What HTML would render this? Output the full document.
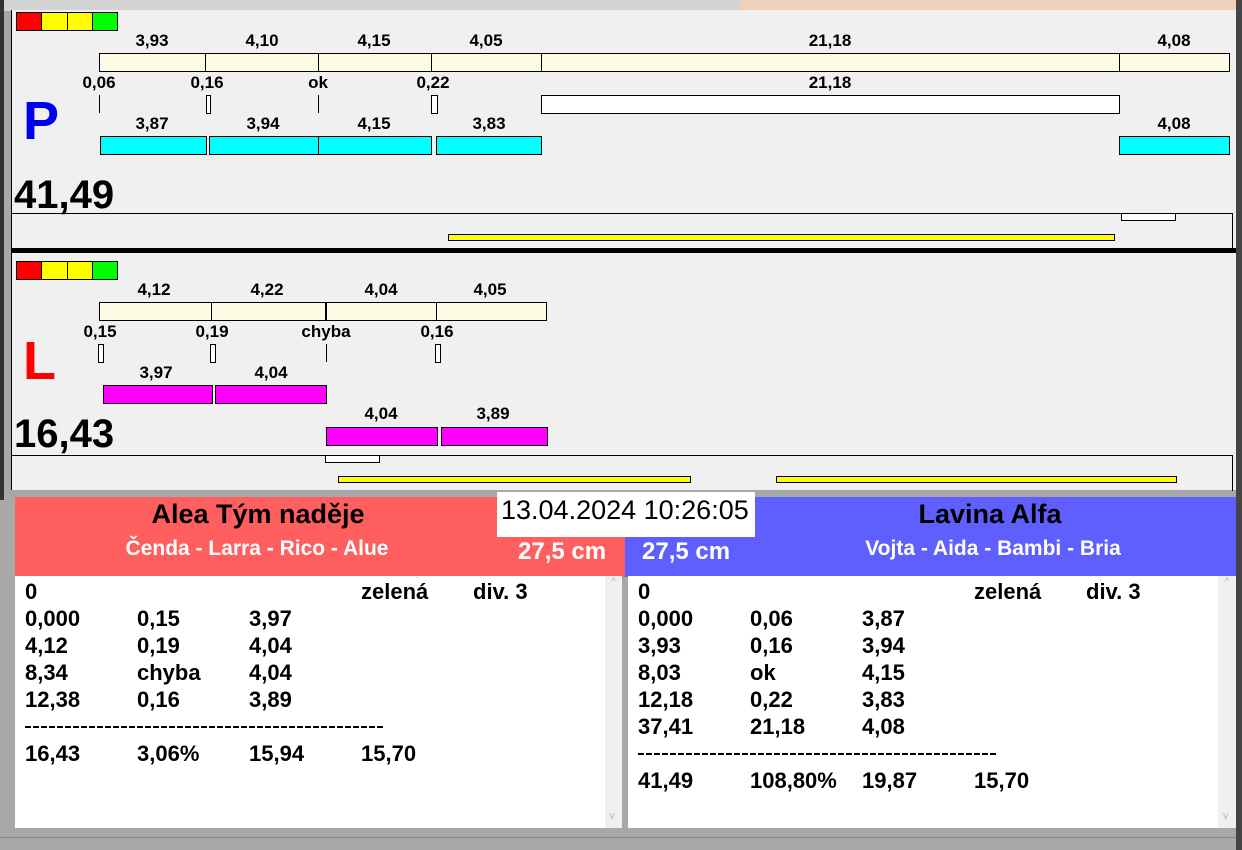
<!DOCTYPE html>
<html><head><meta charset="utf-8"><style>
body{margin:0;width:1242px;height:850px;overflow:hidden;background:#a8a8a8;position:relative;font-family:"Liberation Sans",Arial,sans-serif}
div{position:absolute;box-sizing:border-box}
.b{border:1px solid #000}
.y{background:#fdfbe3}.c{background:#00ffff}.m{background:#ff00ff}.w{background:#fff}.ye{background:#ffff00}
.t{font-weight:bold;font-size:17px;transform:translateX(-50%);white-space:nowrap;line-height:16px}
.v{width:1px;background:#000}
.r{font-weight:bold;font-size:22px;line-height:20px;white-space:nowrap}
.d{height:2px;background:repeating-linear-gradient(90deg,#000 0 6px,transparent 6px 8px)}
</style></head><body>
<div style="left:0;top:0;width:1242px;height:11px;background:#d4d4d4"></div>
<div style="left:740px;top:0;width:496px;height:11px;background:#ecd2bc"></div>
<div style="left:0;top:0;width:4px;height:500px;background:#333"></div>
<div style="left:1236px;top:0;width:6px;height:850px;background:#444"></div>

<div style="left:11px;top:10px;width:1225px;height:240px;background:#f0f0f0;border-left:1px solid #000"></div>
<div class="b" style="left:16px;top:12px;width:26px;height:19px;background:#f00"></div>
<div class="b" style="left:41px;top:12px;width:27px;height:19px;background:#ff0"></div>
<div class="b" style="left:67px;top:12px;width:26px;height:19px;background:#ff0"></div>
<div class="b" style="left:92px;top:12px;width:26px;height:19px;background:#0f0"></div>

<div class="t" style="left:152px;top:33px">3,93</div>
<div class="t" style="left:262px;top:33px">4,10</div>
<div class="t" style="left:374px;top:33px">4,15</div>
<div class="t" style="left:486px;top:33px">4,05</div>
<div class="t" style="left:830px;top:33px">21,18</div>
<div class="t" style="left:1174px;top:33px">4,08</div>
<div class="b y" style="left:99px;top:53px;width:108px;height:19px;border-right-width:2px"></div>
<div class="b y" style="left:205px;top:53px;width:114px;height:19px"></div>
<div class="b y" style="left:318px;top:53px;width:115px;height:19px;border-right-width:2px"></div>
<div class="b y" style="left:431px;top:53px;width:111px;height:19px"></div>
<div class="b y" style="left:541px;top:53px;width:579px;height:19px"></div>
<div class="b y" style="left:1119px;top:53px;width:111px;height:19px"></div>

<div class="t" style="left:99px;top:75px">0,06</div>
<div class="t" style="left:207px;top:75px">0,16</div>
<div class="t" style="left:318px;top:75px">ok</div>
<div class="t" style="left:433px;top:75px">0,22</div>
<div class="t" style="left:830px;top:75px">21,18</div>
<div class="v" style="left:99px;top:95px;height:18px"></div>
<div class="b w" style="left:206px;top:95px;width:5px;height:19px"></div>
<div class="v" style="left:318px;top:95px;height:18px"></div>
<div class="b w" style="left:431px;top:95px;width:7px;height:19px"></div>
<div class="b w" style="left:541px;top:95px;width:579px;height:19px"></div>

<div class="t" style="left:152px;top:116px">3,87</div>
<div class="t" style="left:263px;top:116px">3,94</div>
<div class="t" style="left:374px;top:116px">4,15</div>
<div class="t" style="left:489px;top:116px">3,83</div>
<div class="t" style="left:1174px;top:116px">4,08</div>
<div class="b c" style="left:100px;top:136px;width:107px;height:19px"></div>
<div class="b c" style="left:209px;top:136px;width:110px;height:19px"></div>
<div class="b c" style="left:318px;top:136px;width:114px;height:19px"></div>
<div class="b c" style="left:436px;top:136px;width:106px;height:19px"></div>
<div class="b c" style="left:1119px;top:136px;width:111px;height:19px"></div>

<div style="left:23px;top:94px;font-size:54px;font-weight:bold;color:#0000ee;line-height:54px">P</div>
<div style="left:14px;top:175px;font-size:40px;font-weight:bold;line-height:40px">41,49</div>
<div style="left:12px;top:213px;width:1221px;height:36px;border-top:1px solid #000;border-right:1px solid #000"></div>
<div class="b w" style="left:1121px;top:213px;width:55px;height:8px"></div>
<div class="b ye" style="left:448px;top:234px;width:667px;height:7px"></div>
<div style="left:11px;top:248px;width:1225px;height:5px;background:#000"></div>

<div style="left:11px;top:253px;width:1225px;height:237px;background:#f0f0f0;border-left:1px solid #000"></div>
<div class="b" style="left:16px;top:261px;width:26px;height:19px;background:#f00"></div>
<div class="b" style="left:41px;top:261px;width:27px;height:19px;background:#ff0"></div>
<div class="b" style="left:67px;top:261px;width:26px;height:19px;background:#ff0"></div>
<div class="b" style="left:92px;top:261px;width:26px;height:19px;background:#0f0"></div>

<div class="t" style="left:154px;top:282px">4,12</div>
<div class="t" style="left:267px;top:282px">4,22</div>
<div class="t" style="left:381px;top:282px">4,04</div>
<div class="t" style="left:490px;top:282px">4,05</div>
<div class="b y" style="left:99px;top:302px;width:113px;height:19px"></div>
<div class="b y" style="left:211px;top:302px;width:116px;height:19px;border-right-width:2px"></div>
<div class="b y" style="left:326px;top:302px;width:111px;height:19px"></div>
<div class="b y" style="left:436px;top:302px;width:111px;height:19px"></div>

<div class="t" style="left:100px;top:324px">0,15</div>
<div class="t" style="left:212px;top:324px">0,19</div>
<div class="t" style="left:326px;top:324px">chyba</div>
<div class="t" style="left:437px;top:324px">0,16</div>
<div class="b w" style="left:98px;top:344px;width:6px;height:19px"></div>
<div class="b w" style="left:210px;top:344px;width:6px;height:19px"></div>
<div class="v" style="left:326px;top:344px;height:18px"></div>
<div class="b w" style="left:435px;top:344px;width:6px;height:19px"></div>

<div class="t" style="left:156px;top:365px">3,97</div>
<div class="t" style="left:271px;top:365px">4,04</div>
<div class="b m" style="left:103px;top:385px;width:110px;height:19px"></div>
<div class="b m" style="left:215px;top:385px;width:112px;height:19px"></div>
<div class="t" style="left:381px;top:406px">4,04</div>
<div class="t" style="left:493px;top:406px">3,89</div>
<div class="b m" style="left:326px;top:427px;width:112px;height:19px"></div>
<div class="b m" style="left:441px;top:427px;width:107px;height:19px"></div>

<div style="left:23px;top:334px;font-size:54px;font-weight:bold;color:#ff0000;line-height:54px">L</div>
<div style="left:14px;top:414px;font-size:40px;font-weight:bold;line-height:40px">16,43</div>
<div style="left:12px;top:455px;width:1221px;height:36px;border-top:1px solid #000;border-right:1px solid #000"></div>
<div class="b w" style="left:325px;top:455px;width:55px;height:8px"></div>
<div class="b ye" style="left:338px;top:476px;width:353px;height:7px"></div>
<div class="b ye" style="left:776px;top:476px;width:401px;height:7px"></div>

<div style="left:15px;top:497px;width:610px;height:80px;background:#ff5f5f"></div>
<div style="left:625px;top:497px;width:611px;height:80px;background:#5f5fff"></div>
<div style="left:258px;top:499px;transform:translateX(-50%);font-size:27px;font-weight:bold;white-space:nowrap">Alea Tým naděje</div>
<div style="left:257px;top:537px;transform:translateX(-50%);font-size:21px;font-weight:bold;color:#fff;white-space:nowrap">Čenda - Larra - Rico - Alue</div>
<div style="left:518px;top:538px;font-size:24px;font-weight:bold;color:#fff;white-space:nowrap">27,5 cm</div>
<div style="left:990px;top:499px;transform:translateX(-50%);font-size:27px;font-weight:bold;white-space:nowrap">Lavina Alfa</div>
<div style="left:993px;top:537px;transform:translateX(-50%);font-size:21px;font-weight:bold;color:#fff;white-space:nowrap">Vojta - Aida - Bambi - Bria</div>
<div style="left:642px;top:538px;font-size:24px;font-weight:bold;color:#fff;white-space:nowrap">27,5 cm</div>
<div style="left:497px;top:492px;width:258px;height:45px;background:#fff;font-size:27px;padding:3px 0 0 4px;white-space:nowrap">13.04.2024 10:26:05</div>

<div style="left:15px;top:576px;width:590px;height:252px;background:#fff"></div>
<div style="left:605px;top:576px;width:17px;height:252px;background:#f0f0f0;color:#bbb;font-size:11px;text-align:center">^<div style="left:4px;top:234px">v</div></div>
<div style="left:628px;top:576px;width:590px;height:252px;background:#fff"></div>
<div style="left:1218px;top:576px;width:18px;height:252px;background:#f0f0f0;color:#bbb;font-size:11px;text-align:center">^<div style="left:5px;top:234px">v</div></div>
<div style="left:0;top:837px;width:1236px;height:1px;background:#888"></div>

<div class="r" style="left:25px;top:582px">0</div><div class="r" style="left:361px;top:582px">zelená</div><div class="r" style="left:473px;top:582px">div. 3</div>
<div class="r" style="left:25px;top:609px">0,000</div><div class="r" style="left:137px;top:609px">0,15</div><div class="r" style="left:249px;top:609px">3,97</div>
<div class="r" style="left:25px;top:636px">4,12</div><div class="r" style="left:137px;top:636px">0,19</div><div class="r" style="left:249px;top:636px">4,04</div>
<div class="r" style="left:25px;top:663px">8,34</div><div class="r" style="left:137px;top:663px">chyba</div><div class="r" style="left:249px;top:663px">4,04</div>
<div class="r" style="left:25px;top:690px">12,38</div><div class="r" style="left:137px;top:690px">0,16</div><div class="r" style="left:249px;top:690px">3,89</div>
<div class="d" style="left:25px;top:726px;width:360px"></div>
<div class="r" style="left:25px;top:744px">16,43</div><div class="r" style="left:137px;top:744px">3,06%</div><div class="r" style="left:249px;top:744px">15,94</div><div class="r" style="left:361px;top:744px">15,70</div>

<div class="r" style="left:638px;top:582px">0</div><div class="r" style="left:974px;top:582px">zelená</div><div class="r" style="left:1086px;top:582px">div. 3</div>
<div class="r" style="left:638px;top:609px">0,000</div><div class="r" style="left:750px;top:609px">0,06</div><div class="r" style="left:862px;top:609px">3,87</div>
<div class="r" style="left:638px;top:636px">3,93</div><div class="r" style="left:750px;top:636px">0,16</div><div class="r" style="left:862px;top:636px">3,94</div>
<div class="r" style="left:638px;top:663px">8,03</div><div class="r" style="left:750px;top:663px">ok</div><div class="r" style="left:862px;top:663px">4,15</div>
<div class="r" style="left:638px;top:690px">12,18</div><div class="r" style="left:750px;top:690px">0,22</div><div class="r" style="left:862px;top:690px">3,83</div>
<div class="r" style="left:638px;top:717px">37,41</div><div class="r" style="left:750px;top:717px">21,18</div><div class="r" style="left:862px;top:717px">4,08</div>
<div class="d" style="left:638px;top:753px;width:360px"></div>
<div class="r" style="left:638px;top:771px">41,49</div><div class="r" style="left:750px;top:771px">108,80%</div><div class="r" style="left:862px;top:771px">19,87</div><div class="r" style="left:974px;top:771px">15,70</div>
</body></html>
